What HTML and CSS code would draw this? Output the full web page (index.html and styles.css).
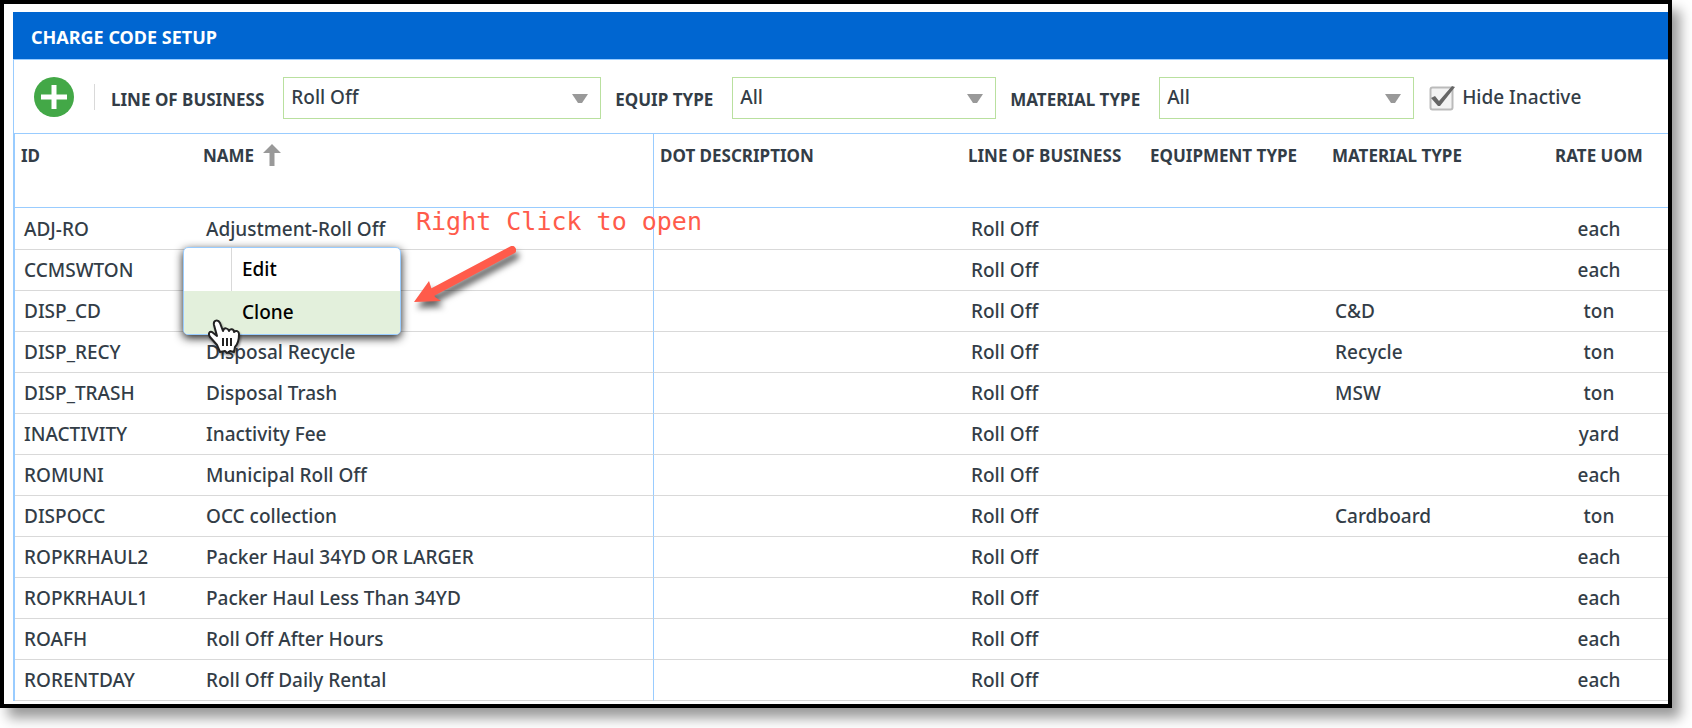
FILE: index.html
```html
<!DOCTYPE html>
<html lang="en">
<head>
    <meta charset="UTF-8">
    <title>Charge Code Setup</title>
    <link rel="stylesheet" href="styles.css">
</head>
<body>

<div class="frame">
    <div class="panel">
        <h1 class="panel-title">CHARGE CODE SETUP</h1>

        <div class="toolbar">
            <button class="add-btn" type="button" aria-label="Add">
                <svg width="40" height="40" viewBox="0 0 40 40">
                    <circle cx="20" cy="20" r="20" fill="#43a847"/>
                    <path d="M20 8v24M7 20h26" stroke="#fff" stroke-width="5" fill="none"/>
                </svg>
            </button>
            <span class="divider"></span>
            <label class="filter-label" for="lob">LINE OF BUSINESS</label>
            <select class="filter filter-lob" id="lob"><option>Roll Off</option></select>
            <label class="filter-label" for="equip">EQUIP TYPE</label>
            <select class="filter filter-equip" id="equip"><option>All</option></select>
            <label class="filter-label" for="material">MATERIAL TYPE</label>
            <select class="filter filter-material" id="material"><option>All</option></select>
            <input class="check" type="checkbox" id="hide" checked>
            <label for="hide">Hide Inactive</label>
        </div>

        <table class="grid">
            <colgroup>
                <col class="col">
                <col class="col-name">
                <col>
                <col class="col">
                <col class="col">
                <col class="col">
                <col class="col">
            </colgroup>
            <thead>
                <tr>
                    <th>ID</th>
                    <th>NAME
                        <svg class="sort" width="18" height="22" viewBox="0 0 18 22">
                            <path d="M9 0l9 9h-6.500v13h-5V9H0z" fill="#999"/>
                        </svg>
                    </th>
                    <th>DOT DESCRIPTION</th>
                    <th>LINE OF BUSINESS</th>
                    <th>EQUIPMENT TYPE</th>
                    <th>MATERIAL TYPE</th>
                    <th>RATE UOM</th>
                </tr>
            </thead>
            <tbody>
                <tr><td>ADJ-RO</td><td>Adjustment-Roll Off</td><td></td><td>Roll Off</td><td></td><td></td><td>each</td></tr>
                <tr><td>CCMSWTON</td><td></td><td></td><td>Roll Off</td><td></td><td></td><td>each</td></tr>
                <tr><td>DISP_CD</td><td></td><td></td><td>Roll Off</td><td></td><td>C&amp;D</td><td>ton</td></tr>
                <tr><td>DISP_RECY</td><td>Disposal Recycle</td><td></td><td>Roll Off</td><td></td><td>Recycle</td><td>ton</td></tr>
                <tr><td>DISP_TRASH</td><td>Disposal Trash</td><td></td><td>Roll Off</td><td></td><td>MSW</td><td>ton</td></tr>
                <tr><td>INACTIVITY</td><td>Inactivity Fee</td><td></td><td>Roll Off</td><td></td><td></td><td>yard</td></tr>
                <tr><td>ROMUNI</td><td>Municipal Roll Off</td><td></td><td>Roll Off</td><td></td><td></td><td>each</td></tr>
                <tr><td>DISPOCC</td><td>OCC collection</td><td></td><td>Roll Off</td><td></td><td>Cardboard</td><td>ton</td></tr>
                <tr><td>ROPKRHAUL2</td><td>Packer Haul 34YD OR LARGER</td><td></td><td>Roll Off</td><td></td><td></td><td>each</td></tr>
                <tr><td>ROPKRHAUL1</td><td>Packer Haul Less Than 34YD</td><td></td><td>Roll Off</td><td></td><td></td><td>each</td></tr>
                <tr><td>ROAFH</td><td>Roll Off After Hours</td><td></td><td>Roll Off</td><td></td><td></td><td>each</td></tr>
                <tr><td>RORENTDAY</td><td>Roll Off Daily Rental</td><td></td><td>Roll Off</td><td></td><td></td><td>each</td></tr>
            </tbody>
        </table>
    </div>

    <!-- context menu -->
    <div class="menu">
        <button type="button">Edit</button>
        <button type="button" class="active">Clone</button>
    </div>

    <svg class="cursor" width="32" height="36" viewBox="0 0 32 36">
        <path d="M12 33L9 26 2 18C0 15 1 12 4 13l5 4L6 6C5 1 10 0 12 4l3 8c1-4 5-3 6 0 1-3 5-2 5 1 2-2 5-1 5 2 0 6-1 10-4 13l-1 5-4-1-3 2-2-2z" fill="#fff" stroke="#222" stroke-width="2" stroke-linejoin="round"/>
        <path d="M15 19v8M19 19v8M23 19v8" stroke="#222" stroke-width="2"/>
    </svg>

    <!-- callout -->
    <span class="note">Right Click to open</span>
    <svg class="arrow" width="106" height="64" viewBox="0 0 106 64">
        <path d="M98 5L17 48" stroke="#ff5b4b" stroke-width="8" stroke-linecap="round"/>
        <path d="M0 57L15 36l3 9 3 7 6 4z" fill="#ff5b4b"/>
    </svg>
</div>

</body>
</html>
```
FILE: styles.css
```css
* {
    box-sizing: border-box;
}
body {
    margin: 0;
    padding: 0 20px 20px 0;
    background: #fff;
    color: #333d47;
    font-family: "Noto Sans", sans-serif;
    font-size: 19px;
    font-weight: 500;
    overflow: hidden;
}
.frame {
    position: relative;
    height: calc(100vh - 20px);
    border: 4px solid #000;
    padding: 8px 0 0 9px;
    box-shadow: 8px 10px 12px rgba(0, 0, 0, 0.4);
}
.panel {
    height: 100%;
    overflow: hidden;
}
.panel-title {
    margin: 0;
    padding: 4px 0 0 18px;
    background: #0066d1;
    color: #fff;
    font-size: 18px;
    line-height: 43px;
}
.toolbar {
    display: flex;
    align-items: center;
    height: 74px;
    border-top: 1px solid #99ccff;
    border-left: 1px solid #99ccff;
    padding-left: 20px;
    white-space: nowrap;
}
.add-btn {
    width: 40px;
    height: 40px;
    border: 0;
    padding: 0;
    background: none;
}
.add-btn svg {
    display: block;
}
.divider {
    width: 1px;
    height: 26px;
    margin: 0 16px 0 20px;
    background: #d9d9d9;
}
.filter-label {
    padding-top: 5px;
    font-size: 17px;
    font-weight: 700;
}
.filter {
    appearance: none;
    height: 42px;
    margin: 2px 14px 0 19px;
    border: 1px solid #b9e09f;
    border-radius: 0;
    padding: 0 7px 2px;
    background: #fff url("data:image/svg+xml,%3Csvg xmlns='http://www.w3.org/2000/svg' width='16' height='9'%3E%3Cpath d='M0 0h16L10 9H6z' fill='%23999'/%3E%3C/svg%3E") right 12px top 16px no-repeat;
    color: inherit;
    font: inherit;
}
.filter-lob {
    width: 318px;
}
.filter-equip {
    width: 264px;
}
.filter-material {
    width: 255px;
}
.check {
    appearance: none;
    width: 26px;
    height: 28px;
    margin: 0 7px 0 1px;
    background: url("data:image/svg+xml,%3Csvg xmlns='http://www.w3.org/2000/svg' width='26' height='28'%3E%3Crect x='1.5' y='4.5' width='22' height='22' rx='2' fill='%23f3f3f3' stroke='%23bbb' stroke-width='2'/%3E%3Cpath d='M2 15l4-2 4 5L23 3l3 1-15 19H9z' fill='%23666'/%3E%3C/svg%3E") no-repeat;
}
.grid {
    width: calc(100% + 22px);
    table-layout: fixed;
    border-collapse: separate;
    border-spacing: 0;
    border-left: 2px solid #99ccff;
}
.col {
    width: 182px;
}
.col-name {
    width: 457px;
}
th {
    height: 75px;
    border-top: 1px solid #99ccff;
    border-bottom: 1px solid #99ccff;
    padding: 10px 6px;
    font-size: 17px;
    text-align: left;
    vertical-align: top;
    white-space: nowrap;
}
.sort {
    margin-left: 4px;
    vertical-align: top;
}
td {
    height: 41px;
    border-bottom: 1px solid #d9d9d9;
    padding: 0 9px;
    white-space: nowrap;
}
tbody tr:first-child td {
    height: 42px;
}
th:nth-child(2),
td:nth-child(2) {
    border-right: 1px solid #99ccff;
}
th:last-child,
td:last-child {
    text-align: center;
}
.menu {
    position: absolute;
    left: 179px;
    top: 243px;
    width: 218px;
    border: 1px solid #99ccff;
    border-radius: 5px;
    background: #fff;
    box-shadow: 0 3px 10px rgba(0, 0, 0, 0.9);
    overflow: hidden;
}
.menu button {
    display: block;
    width: 100%;
    height: 43px;
    border: 0;
    padding: 0 0 2px 58px;
    background: linear-gradient(#d9d9d9, #d9d9d9) 47px 0 / 1px 100% no-repeat;
    color: #000;
    font: inherit;
    text-align: left;
}
.menu .active {
    background: #e3f0dc;
}
.cursor {
    position: absolute;
    left: 204px;
    top: 315px;
    overflow: visible;
    filter: drop-shadow(1px 2px 1px rgba(0, 0, 0, 0.4));
}
.note {
    position: absolute;
    left: 412px;
    top: 203px;
    color: #ff5b4b;
    font-family: "DejaVu Sans Mono", monospace;
    font-size: 25px;
}
.arrow {
    position: absolute;
    left: 410px;
    top: 241px;
    overflow: visible;
    filter: drop-shadow(3px 6px 3px rgba(0, 0, 0, 0.6));
}
```
